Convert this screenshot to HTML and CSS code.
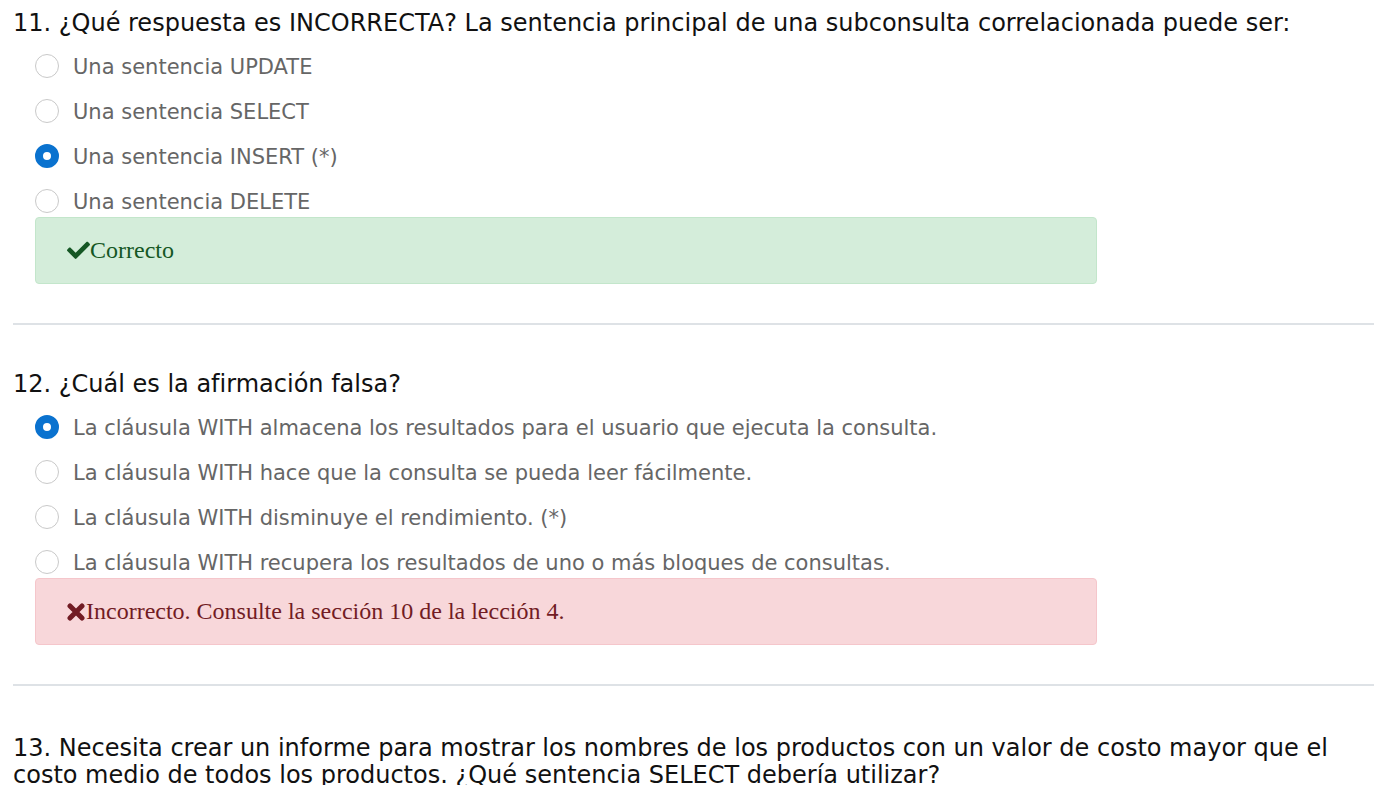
FILE: index.html
```html
<!DOCTYPE html>
<html lang="es">
<head>
<meta charset="utf-8">
<title>Prueba</title>
<link rel="stylesheet" href="styles.css">
</head>
<body>
<div class="quiz">
  <section class="question">
    <div class="q-title">11. ¿Qué respuesta es INCORRECTA? La sentencia principal de una subconsulta correlacionada puede ser:</div>
    <div class="options">
      <div class="opt"><span class="radio"></span><span class="opt-text">Una sentencia UPDATE</span></div>
      <div class="opt"><span class="radio"></span><span class="opt-text">Una sentencia SELECT</span></div>
      <div class="opt"><span class="radio checked"></span><span class="opt-text">Una sentencia INSERT (*)</span></div>
      <div class="opt"><span class="radio"></span><span class="opt-text">Una sentencia DELETE</span></div>
    </div>
    <div class="alert alert-ok">
      <svg class="ico" viewBox="0 0 512 420" width="23" height="19"><path d="M173.9 389.4L7.5 223c-10-10-10-26.2 0-36.2l36.2-36.2c10-10 26.2-10 36.2 0L192 262.7 432.1 22.6c10-10 26.2-10 36.2 0l36.2 36.2c10 10 10 26.2 0 36.2L210.1 389.4c-10 10-26.2 10-36.2 0z" fill="currentColor"/></svg><span>Correcto</span>
    </div>
  </section>
  <hr class="sep">
  <section class="question">
    <div class="q-title">12. ¿Cuál es la afirmación falsa?</div>
    <div class="options">
      <div class="opt"><span class="radio checked"></span><span class="opt-text">La cláusula WITH almacena los resultados para el usuario que ejecuta la consulta.</span></div>
      <div class="opt"><span class="radio"></span><span class="opt-text">La cláusula WITH hace que la consulta se pueda leer fácilmente.</span></div>
      <div class="opt"><span class="radio"></span><span class="opt-text">La cláusula WITH disminuye el rendimiento. (*)</span></div>
      <div class="opt"><span class="radio"></span><span class="opt-text">La cláusula WITH recupera los resultados de uno o más bloques de consultas.</span></div>
    </div>
    <div class="alert alert-bad">
      <svg class="ico ico-x" viewBox="0 0 18 18" width="18" height="18"><path d="M3 3L15 15M15 3L3 15" stroke="currentColor" stroke-width="5" stroke-linecap="round"/></svg><span>Incorrecto. Consulte la sección 10 de la lección 4.</span>
    </div>
  </section>
  <hr class="sep">
  <section class="question q-last">
    <div class="q-title">13. Necesita crear un informe para mostrar los nombres de los productos con un valor de costo mayor que el costo medio de todos los productos. ¿Qué sentencia SELECT debería utilizar?</div>
  </section>
</div>
</body>
</html>
```

FILE: styles.css
```css
html, body {
  margin: 0;
  padding: 0;
  background: #ffffff;
}

.quiz {
  padding: 10px 0 0 13px;
  font-family: "DejaVu Sans", Verdana, sans-serif;
}

.question {
  display: flex;
  flex-direction: column;
}

.q-title {
  font-size: 24px;
  line-height: 27px;
  color: #111111;
  padding-right: 30px;
}

.q-last {
  padding-top: 3px;
}

.options {
  display: flex;
  flex-direction: column;
  padding-left: 22px;
}

.opt {
  height: 45px;
  display: flex;
  align-items: flex-end;
}

.opt .radio {
  margin-bottom: 4px;
}

.opt-text {
  font-size: 21px;
  line-height: 30px;
  color: #666666;
  margin-left: 14px;
}

.radio {
  width: 24px;
  height: 24px;
  box-sizing: border-box;
  border-radius: 50%;
  border: 1px solid #c9c9c9;
  background: #ffffff;
  flex: none;
}

.radio.checked {
  border: 8px solid #0a72cf;
  background: #ffffff;
}

.alert {
  width: 1062px;
  height: 67px;
  box-sizing: border-box;
  margin-left: 22px;
  border-radius: 4px;
  display: flex;
  align-items: center;
  padding-left: 31px;
  font-family: "Liberation Serif", "Times New Roman", serif;
  font-size: 24px;
}

.alert-ok {
  background: #d4edda;
  border: 1px solid #c3e6cb;
  color: #155724;
}

.alert-bad {
  background: #f8d7da;
  border: 1px solid #f5c6cb;
  color: #721c24;
}

.ico {
  flex: none;
  margin-right: 0;
}

.ico-x {
  margin-right: 1px;
}

.sep {
  border: 0;
  height: 2px;
  background: #dee2e6;
  margin: 39px 0 46px 0;
}
```
